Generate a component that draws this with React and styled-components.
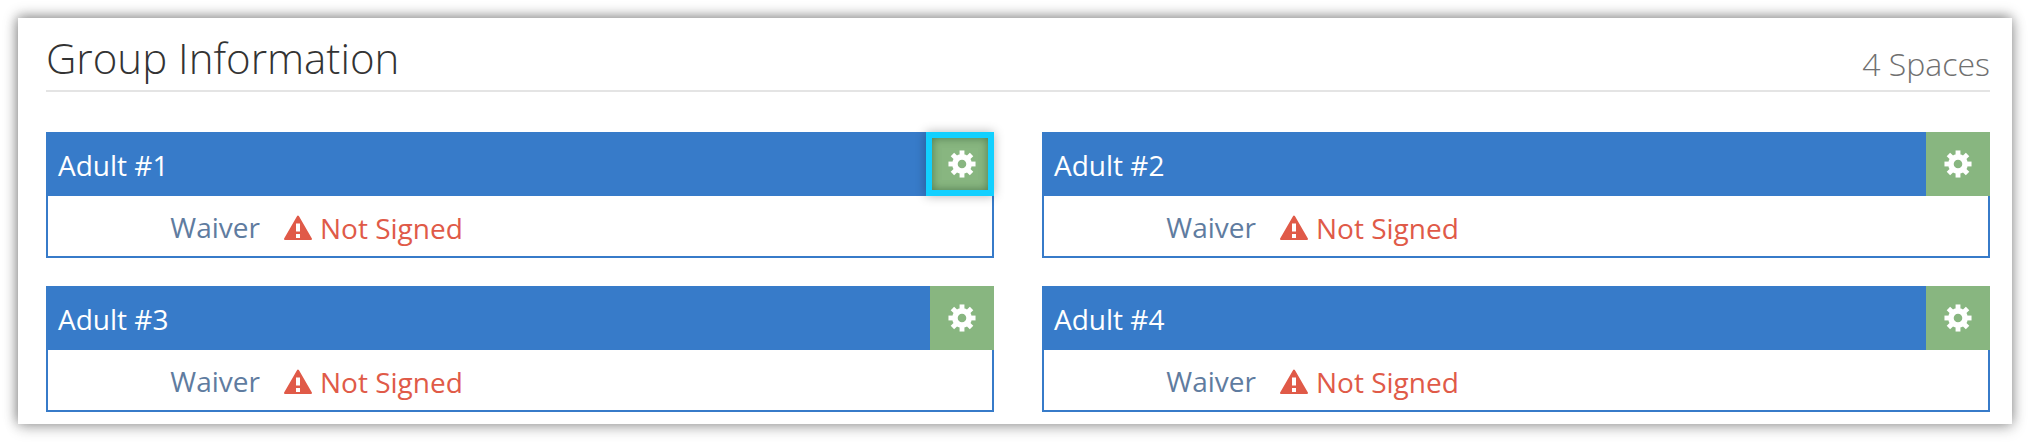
import styled, { createGlobalStyle } from "styled-components";

const GlobalStyle = createGlobalStyle`
  body {
    margin: 0;
    background: #fff;
    font-family: "Open Sans", "Liberation Sans", sans-serif;
  }
`;

const Panel = styled.section`
  box-sizing: border-box;
  width: 1994px;
  height: 406px;
  margin: 18px;
  padding: 0 22px 0 28px;
  background: #fff;
  box-shadow: -1px -2px 12px rgba(0, 0, 0, 0.42), 1px 4px 14px rgba(0, 0, 0, 0.2);
`;

const PanelHeader = styled.header`
  display: flex;
  align-items: flex-end;
  justify-content: space-between;
  height: 72px;
  border-bottom: 2px solid #e4e4e4;
  box-sizing: content-box;
`;

const Title = styled.h2`
  margin: 0 0 4px;
  font-size: 42px;
  line-height: 56px;
  font-weight: 300;
  color: #333;
`;

const SpaceCount = styled.span`
  margin-bottom: 6px;
  font-size: 32px;
  line-height: 40px;
  font-weight: 300;
  color: #707070;
`;

const Grid = styled.div`
  display: grid;
  grid-template-columns: 948px 948px;
  column-gap: 48px;
  row-gap: 28px;
  margin-top: 40px;
`;

const Card = styled.article`
  height: 126px;
  box-sizing: border-box;
  border: 2px solid #377bc9;
  border-top: 0;
`;

const CardHead = styled.div`
  display: flex;
  align-items: center;
  justify-content: space-between;
  height: 64px;
  margin: 0 -2px;
  background: #377bc9;
`;

const CardName = styled.h3`
  margin: 2px 0 0 12px;
  font-size: 28px;
  line-height: 36px;
  font-weight: 400;
  color: #fff;
`;

const GearButton = styled.button`
  display: flex;
  align-items: center;
  justify-content: center;
  box-sizing: border-box;
  width: ${(p) => (p.$focused ? "68px" : "64px")};
  height: 64px;
  padding: ${(p) => (p.$focused ? "0 0 0 4px" : "0")};
  border: ${(p) => (p.$focused ? "6px solid #12d0ff" : "0")};
  background: #88b680;
  box-shadow: ${(p) =>
    p.$focused
      ? "inset 0 0 8px rgba(60, 100, 60, 0.75), 0 0 10px rgba(0, 0, 0, 0.3)"
      : "none"};
`;

const FieldRow = styled.div`
  display: grid;
  grid-template-columns: 212px auto;
  column-gap: 24px;
  align-items: center;
  height: 62px;
  padding-top: 2px;
  box-sizing: border-box;
`;

const FieldLabel = styled.span`
  justify-self: end;
  margin-bottom: 2px;
  font-size: 28px;
  line-height: 36px;
  color: #5f7ca0;
`;

const Status = styled.span`
  display: flex;
  align-items: center;
  gap: 8px;
  font-size: 28px;
  line-height: 36px;
  color: #e05a48;
`;

const teeth = [0, 45, 90, 135, 180, 225, 270, 315];

function Gear() {
  return (
    <svg width="28" height="28" viewBox="-15 -15 30 30" fill="none" stroke="#fff">
      <circle r="7.6" strokeWidth="6" />
      {teeth.map((angle) => (
        <line
          key={angle}
          x1="0"
          y1="-9"
          x2="0"
          y2="-14.5"
          strokeWidth="5.2"
          transform={`rotate(${angle})`}
        />
      ))}
    </svg>
  );
}

function Warning() {
  return (
    <svg width="28" height="26" viewBox="0 0 28 26">
      <path
        d="M14 1.5 L27 24 H1 Z"
        fill="#e05a48"
        stroke="#e05a48"
        strokeWidth="2"
        strokeLinejoin="round"
      />
      <rect x="12" y="8.5" width="4" height="8" fill="#fff" />
      <rect x="12" y="19" width="4" height="4" fill="#fff" />
    </svg>
  );
}

const adults = [1, 2, 3, 4];

export default function App() {
  return (
    <>
      <GlobalStyle />
      <Panel>
        <PanelHeader>
          <Title>Group Information</Title>
          <SpaceCount>4 Spaces</SpaceCount>
        </PanelHeader>
        <Grid>
          {adults.map((n) => (
            <Card key={n}>
              <CardHead>
                <CardName>Adult #{n}</CardName>
                <GearButton $focused={n === 1} aria-label="Settings">
                  <Gear />
                </GearButton>
              </CardHead>
              <FieldRow>
                <FieldLabel>Waiver</FieldLabel>
                <Status>
                  <Warning />
                  Not Signed
                </Status>
              </FieldRow>
            </Card>
          ))}
        </Grid>
      </Panel>
    </>
  );
}
